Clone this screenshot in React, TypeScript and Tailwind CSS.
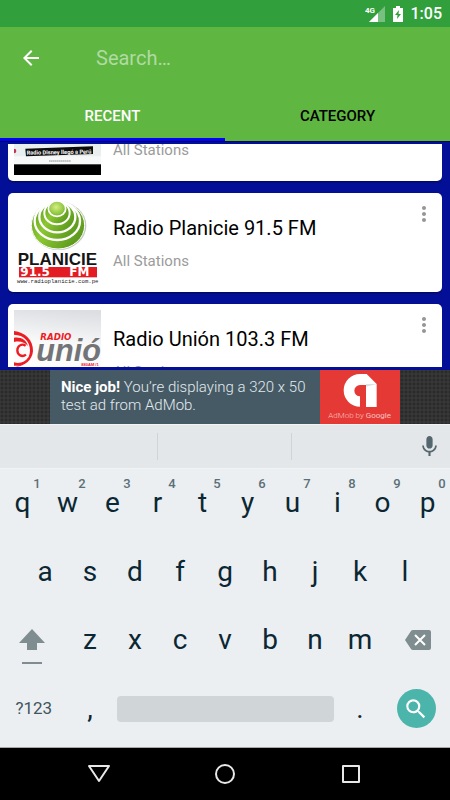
import type { ReactNode } from 'react';
import { MdArrowBack, MdMic, MdMoreVert, MdSearch } from 'react-icons/md';

const topRow = ['q', 'w', 'e', 'r', 't', 'y', 'u', 'i', 'o', 'p'];
const middleRow = ['a', 's', 'd', 'f', 'g', 'h', 'j', 'k', 'l'];
const bottomRow = ['z', 'x', 'c', 'v', 'b', 'n', 'm'];

function DisneyLogo() {
  return (
    <svg viewBox="0 0 261 261" className="size-[87px] shrink-0" aria-hidden="true">
      <rect width="261" height="261" fill="#e9eeee" />
      <rect y="205" width="261" height="24" fill="#f7f9f9" />
      <circle cx="0" cy="189" r="7" fill="#c8324c" />
      <path d="M34 182l203-7v23l-201 7z" fill="#0c0c0c" />
      <text x="38" y="200" fontSize="17" fontWeight="700" fill="#fff" fontFamily="Roboto, sans-serif" transform="rotate(-1 38 200)">Radio Disney llegó a Perú</text>
      <path d="M105 219h65" stroke="#8c9090" strokeWidth="3" strokeDasharray="5 1" />
      <rect y="229" width="261" height="32" fill="#000" />
    </svg>
  );
}

function PlanicieLogo() {
  return (
    <svg viewBox="0 0 261 261" className="size-[87px] shrink-0" aria-hidden="true">
      <defs>
        <linearGradient id="leaf" x1="0" y1="0" x2="1" y2="0.6">
          <stop offset="0" stopColor="#5f9a1c" />
          <stop offset="0.45" stopColor="#8cc832" />
          <stop offset="1" stopColor="#5c991d" />
        </linearGradient>
        <radialGradient id="ball" cx="0.45" cy="0.4" r="0.6">
          <stop offset="0" stopColor="#d3ef83" />
          <stop offset="1" stopColor="#78b728" />
        </radialGradient>
      </defs>
      <rect width="261" height="261" fill="#fff" />
      <ellipse cx="134" cy="80" rx="83" ry="73" fill="#c4c8c0" />
      <ellipse cx="132" cy="79" rx="80" ry="71" fill="url(#leaf)" stroke="#fff" strokeWidth="3" />
      <ellipse cx="130" cy="66" rx="68" ry="57" fill="url(#leaf)" stroke="#fff" strokeWidth="7" />
      <ellipse cx="130" cy="54" rx="54" ry="46" fill="url(#leaf)" stroke="#fff" strokeWidth="7" />
      <ellipse cx="129" cy="42" rx="38" ry="34" fill="url(#leaf)" stroke="#fff" strokeWidth="6" />
      <ellipse cx="129" cy="29" rx="26" ry="23" fill="url(#ball)" stroke="#fff" strokeWidth="5" />
      <text x="11" y="198" fontSize="51" fontWeight="700" fill="#151515" fontFamily="'Liberation Sans', sans-serif">PLANICIE</text>
      <rect x="15" y="204" width="234" height="31" fill="#e31b23" />
      <text x="19" y="232" fontSize="36" fontWeight="700" fill="#fff" fontFamily="'DejaVu Sans', sans-serif">
        91.5
        <tspan x="166">FM</tspan>
      </text>
      <text x="9" y="252" fontSize="17" fill="#222" fontFamily="'Liberation Mono', monospace">www.radioplanicie.com.pe</text>
    </svg>
  );
}

function UnionLogo() {
  return (
    <svg viewBox="0 0 261 261" className="size-[87px] shrink-0" aria-hidden="true">
      <defs>
        <linearGradient id="haze" x1="0.6" y1="0" x2="0.5" y2="1">
          <stop offset="0" stopColor="#dcdee2" />
          <stop offset="0.4" stopColor="#fafafa" />
          <stop offset="1" stopColor="#fff" />
        </linearGradient>
      </defs>
      <rect width="261" height="261" fill="url(#haze)" />
      <g fill="#ed1c24">
        <path d="M0 63c34 4 58 28 57 60-2 26-24 46-52 47 26-7 43-24 43-49C48 95 30 75 0 74z" />
        <path d="M0 83c21-3 38 7 42 25-10-12-25-16-42-12z" />
        <path d="M0 157c17 5 34-1 43-15-4 19-22 28-43 25z" />
      </g>
      <path d="M35 107c-12-8-25 1-25 14 0 14 14 22 26 13" fill="none" stroke="#ed1c24" strokeWidth="7" />
      <text x="79" y="91" fontSize="26" fontWeight="700" fontStyle="italic" fill="#ed1c24" fontFamily="'DejaVu Sans', sans-serif">RADIO</text>
      <text x="67" y="152" fontSize="92" fontWeight="700" fontStyle="italic" fill="#737477" fontFamily="'Liberation Sans', sans-serif">unió</text>
      <text x="202" y="168" fontSize="12" fontWeight="700" fill="#ed1c24" fontFamily="'Liberation Sans', sans-serif">880AM /1</text>
    </svg>
  );
}

function StationCard({ name, logo }: { name: string; logo: ReactNode }) {
  return (
    <li className="flex shrink-0 rounded-[5px] bg-white p-1.5 shadow-[0_1px_2px_rgba(0,0,0,0.5)]">
      {logo}
      <div className="flex-1 pl-3 pt-4">
        <h2 className="text-xl leading-[26px] text-black">{name}</h2>
        <p className="mt-2.5 text-[15px] leading-5 text-[#9b9b9b]">All Stations</p>
      </div>
      <button type="button" aria-label={`Options for ${name}`} className="h-[30px] text-[#969696]">
        <MdMoreVert size={24} />
      </button>
    </li>
  );
}

function Key({ label, hint }: { label: string; hint?: number }) {
  return (
    <button type="button" className="relative col-span-2 text-[28px] leading-8 text-[#0b2733]">
      {label}
      {hint !== undefined && (
        <span className="absolute right-1 top-[7px] w-2 text-center text-[13px] font-medium leading-4 text-[#5b6f77]">{hint}</span>
      )}
    </button>
  );
}

export default function App() {
  return (
    <div className="flex h-screen flex-col overflow-hidden bg-[#040f98] font-['Roboto',sans-serif]">
      {/* Status bar */}
      <div className="flex h-[27px] shrink-0 items-center justify-end bg-[#309f3c] pr-2 text-white">
        <svg viewBox="0 0 20 16" className="h-4 w-5" aria-hidden="true">
          <path d="M4 16L20 0v16z" fill="#fff" opacity="0.35" />
          <path d="M4 16l9-9v9z" fill="#fff" />
          <text x="0" y="7" fontSize="8" fontWeight="700" fill="#fff" fontFamily="Roboto, sans-serif">4G</text>
        </svg>
        <svg viewBox="0 0 10 16" className="ml-2 h-4 w-2.5" aria-hidden="true">
          <path d="M3 0h4v2h3v14H0V2h3z" fill="#fff" />
          <path d="M6 4L2 9h2.500L4 13l4-5H5.500z" fill="#309f3c" />
        </svg>
        <span className="ml-2 text-base font-medium leading-5">1:05</span>
      </div>

      <header className="shrink-0 bg-[#5fb641]">
        <div className="flex h-[61px] items-center px-[19px]">
          <button type="button" aria-label="Back" className="text-white">
            <MdArrowBack size={24} />
          </button>
          <input
            type="text"
            aria-label="Search"
            placeholder="Search…"
            className="ml-[53px] min-w-0 flex-1 bg-transparent text-xl text-white outline-none placeholder:text-[#b0dba1]"
          />
        </div>
        <div role="tablist" className="grid grid-cols-2 text-[15px] font-medium">
          <button type="button" role="tab" aria-selected="true" className="h-[53px] border-b-[3px] border-[#0000fe] pt-1.5 text-white">
            RECENT
          </button>
          <button type="button" role="tab" aria-selected="false" className="h-[53px] border-b-[3px] border-transparent pt-1.5 text-black">
            CATEGORY
          </button>
        </div>
      </header>

      {/* Station list, scrolled part of the way down */}
      <main className="flex min-h-0 flex-1 flex-col border-t border-[#020a58] px-2 pb-[3px] pt-0.5">
        <div className="min-h-0 flex-1 overflow-hidden">
          <ul className="-mt-[62px] flex flex-col gap-3">
            <StationCard name="Radio Disney" logo={<DisneyLogo />} />
            <StationCard name="Radio Planicie 91.5 FM" logo={<PlanicieLogo />} />
            <StationCard name="Radio Unión 103.3 FM" logo={<UnionLogo />} />
          </ul>
        </div>
      </main>

      {/* Banner ad */}
      <aside className="flex shrink-0 justify-center bg-[#383838] bg-[radial-gradient(circle,#2a2a2a_1px,transparent_2px)] bg-[size:4px_4px]">
        <a href="#ad" className="flex h-[54px] w-[350px]">
          <p className="flex-1 whitespace-nowrap bg-[#465a65] pl-[11px] pt-2 text-[15px] font-light leading-[18px] text-[#e3eaed]">
            <b className="font-bold text-white">Nice job!</b> You’re displaying a 320 x 50
            <br />
            test ad from AdMob.
          </p>
          <svg viewBox="0 0 240 162" className="h-[54px] w-20" aria-hidden="true">
            <rect width="240" height="162" fill="#e53935" />
            <path d="M120 110a49 49 0 0 1 0-98h20l30 30v69h-32V45h-18a17 17 0 0 0 0 34z" fill="#fff" />
            <path d="M138 42h32l-32 8z" fill="#e0e0e0" />
            <text x="119" y="145" textAnchor="middle" fontSize="24" fill="#f8c4c2" fontWeight="300" fontFamily="Roboto, sans-serif">
              AdMob by <tspan fontWeight="400">Google</tspan>
            </text>
          </svg>
        </a>
      </aside>

      {/* Keyboard */}
      <section aria-label="Keyboard" className="shrink-0 bg-[#ebeff2]">
        <div className="grid h-[45px] grid-cols-[158fr_134fr_158fr] border-y border-[#f1f4f5] bg-[#e3e7ea] py-2">
          <div className="border-r border-[#cfd4d7]" />
          <div className="border-r border-[#cfd4d7]" />
          <button type="button" aria-label="Voice input" className="flex items-center justify-end pr-2 text-[#54666e]">
            <MdMic size={25} />
          </button>
        </div>
        <div className="grid h-[278px] grid-rows-4 pb-1">
          <div className="grid grid-cols-20">
            {topRow.map((letter, i) => (
              <Key key={letter} label={letter} hint={(i + 1) % 10} />
            ))}
          </div>
          <div className="grid grid-cols-18 px-[5%]">
            {middleRow.map((letter) => (
              <Key key={letter} label={letter} />
            ))}
          </div>
          <div className="grid grid-cols-20">
            <button type="button" aria-label="Shift" className="col-span-3 flex items-center justify-center pr-1 pt-3.5">
              <svg viewBox="0 0 26 36" className="h-9 w-[26px]" aria-hidden="true">
                <path d="M13 0l13 14h-8v7H8v-7H0z" fill="#7f8c90" />
                <path d="M3 33h20v2H3z" fill="#7f8c90" />
              </svg>
            </button>
            {bottomRow.map((letter) => (
              <Key key={letter} label={letter} />
            ))}
            <button type="button" aria-label="Delete" className="col-span-3 flex items-center justify-center pl-1">
              <svg viewBox="0 0 26 20" className="h-5 w-[26px]" aria-hidden="true">
                <path d="M0 10L6 1q.6-1 2-1h16q2 0 2 2v16q0 2-2 2H8q-1.400 0-2-1z" fill="#7f8c90" />
                <path d="M10 5l10 10M20 5L10 15" stroke="#fff" strokeWidth="2" />
              </svg>
            </button>
          </div>
          <div className="grid grid-cols-20">
            <button type="button" className="col-span-3 text-[17px] text-[#41555e]">?123</button>
            <Key label="," />
            <button type="button" aria-label="Space" className="col-span-10 mx-1 h-[26px] self-center rounded bg-[#d0d5d8]" />
            <Key label="." />
            <button type="button" aria-label="Search" className="col-span-3 flex items-center justify-center">
              <span className="flex size-[39px] items-center justify-center rounded-full bg-[#4cb5ab] text-white">
                <MdSearch size={26} />
              </span>
            </button>
          </div>
        </div>
      </section>

      {/* Navigation bar */}
      <nav className="flex h-[53px] shrink-0 items-center justify-center gap-[102px] border-t border-[#a5a8aa] bg-black text-[#e8e8e8]">
        <button type="button" aria-label="Hide keyboard">
          <svg viewBox="0 0 24 24" className="size-6" fill="none" stroke="currentColor" strokeWidth="2" strokeLinejoin="round" aria-hidden="true">
            <path d="M2 4h20L12 19z" />
          </svg>
        </button>
        <button type="button" aria-label="Home">
          <svg viewBox="0 0 24 24" className="size-6" fill="none" stroke="currentColor" strokeWidth="2" aria-hidden="true">
            <circle cx="12" cy="12" r="9" />
          </svg>
        </button>
        <button type="button" aria-label="Recent apps">
          <svg viewBox="0 0 24 24" className="size-6" fill="none" stroke="currentColor" strokeWidth="2" strokeLinejoin="round" aria-hidden="true">
            <rect x="4" y="4" width="16" height="16" />
          </svg>
        </button>
      </nav>
    </div>
  );
}
